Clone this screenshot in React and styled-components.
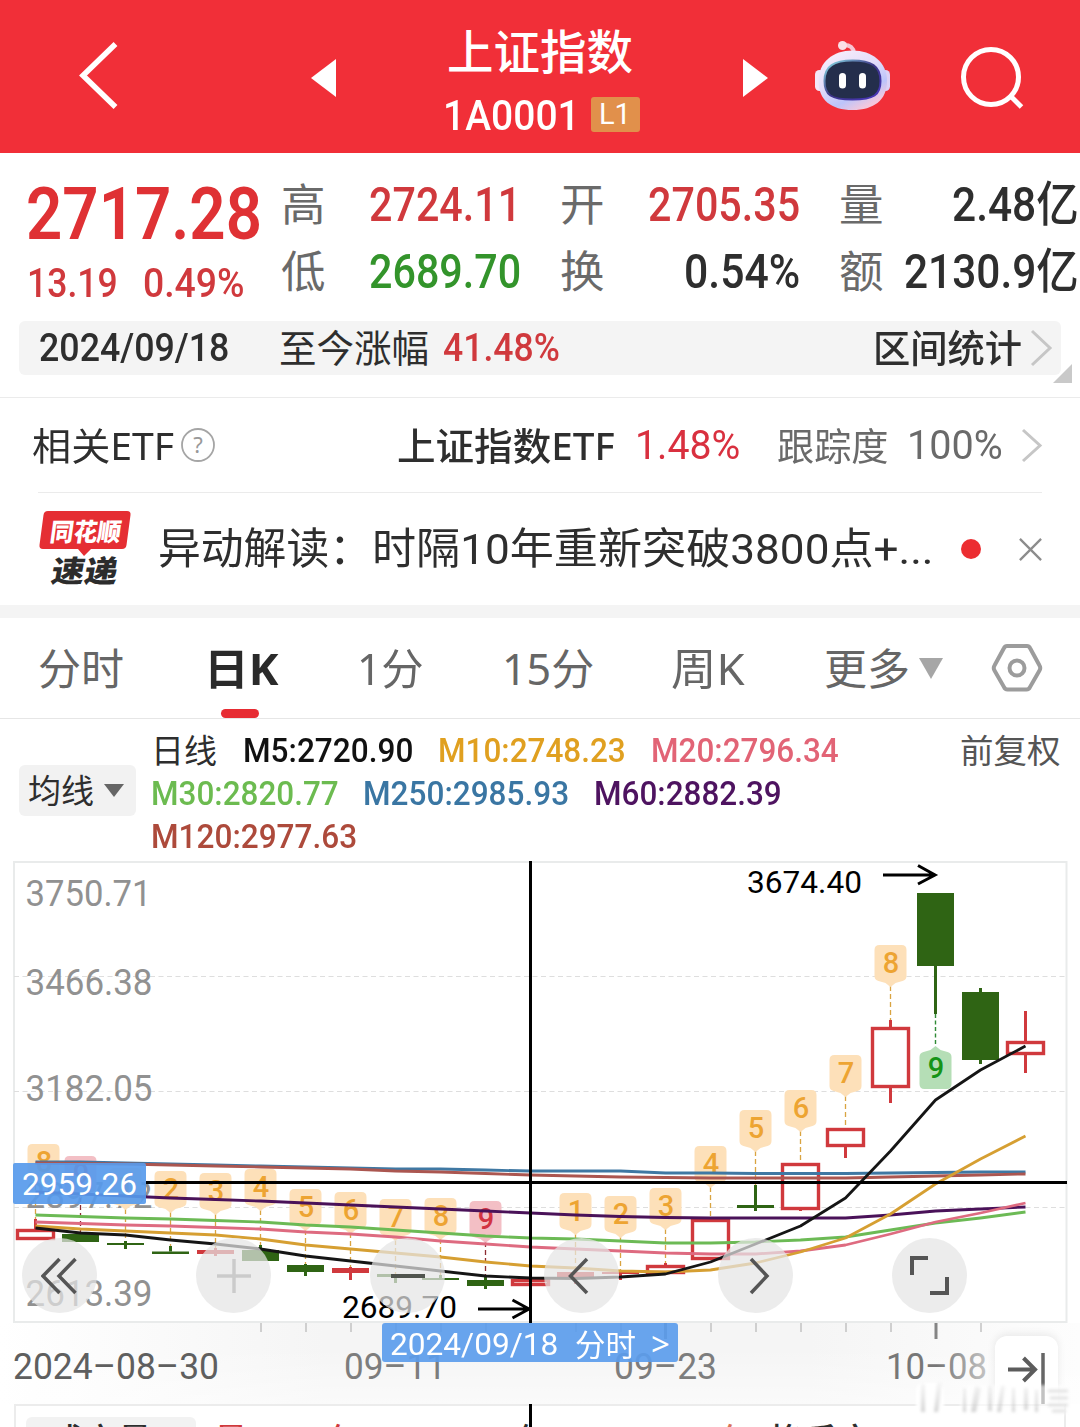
import React, { useLayoutEffect, useRef, useState } from 'react';
import styled, { createGlobalStyle } from 'styled-components';

const numFont = 'Roboto, "Noto Sans CJK SC", sans-serif';
const textFont = '"Noto Sans", "Noto Sans CJK SC", sans-serif';

const RED = '#d0393d';
const GREEN = '#2f6414';

const GlobalStyle = createGlobalStyle`
  body {
    margin: 0;
    background: #fff;
    overflow: hidden;
  }

  * {
    box-sizing: border-box;
  }
`;

const Page = styled.div`
  width: 1080px;
  height: 1427px;
  overflow: hidden;
  background: #fff;
  color: #2e2e2e;
  font-family: ${textFont};
`;

/* ---------- text squeezed to a given width ---------- */

const FitBox = styled.span`
  display: inline-block;
  flex: none;
  width: ${(p) => p.$w}px;
  margin-left: ${(p) => p.$ml || 0}px;
  margin-right: ${(p) => p.$mr || 0}px;
  font-family: ${(p) => (p.$num ? numFont : textFont)};
  font-size: ${(p) => p.$size}px;
  font-weight: ${(p) => p.$weight || 400};
  color: ${(p) => p.$color || 'inherit'};
  white-space: nowrap;
`;

const FitInner = styled.span`
  display: inline-block;
  transform-origin: 0 50%;
`;

function Fit({ w, size, weight, color, num, ml, mr, children }) {
  const ref = useRef(null);
  const [scale, setScale] = useState(1);

  useLayoutEffect(() => {
    setScale(w / ref.current.offsetWidth);
  }, [w, children]);

  return (
    <FitBox $w={w} $size={size} $weight={weight} $color={color} $num={num} $ml={ml} $mr={mr}>
      <FitInner ref={ref} style={{ transform: `scaleX(${scale})` }}>
        {children}
      </FitInner>
    </FitBox>
  );
}

/* ---------- header ---------- */

const Header = styled.header`
  display: flex;
  align-items: center;
  height: 153px;
  padding-left: 78px;
  background: #f12f38;
  color: #fff;

  svg {
    flex: none;
    display: block;
  }
`;

const TitleBlock = styled.div`
  width: 200px;
  margin: 0 102px 0 105px;
  padding-top: 12px;
`;

const Title = styled.div`
  height: 64px;
  padding-left: 6px;
  line-height: 64px;
`;

const CodeLine = styled.div`
  display: flex;
  align-items: center;
  height: 64px;
  padding-left: 2px;
  line-height: 64px;
`;

const LevelTag = styled.span`
  width: 49px;
  height: 35px;
  margin-left: 11px;
  padding-left: 8px;
  border-radius: 3px;
  background: #e1904b;
  line-height: 35px;
`;

const Robot = styled.svg`
  margin-left: 46px;
`;

const Search = styled.svg`
  margin-left: 68px;
`;

const Prev = styled.svg`
  margin-left: 191px;
`;

/* ---------- quote ---------- */

const Quote = styled.section`
  display: flex;
  height: 168px;
  padding-top: 18px;
`;

const Main = styled.div`
  flex: none;
  width: 281px;
  padding-left: 26px;
`;

const Price = styled.div`
  height: 84px;
  line-height: 86px;
`;

const Change = styled.div`
  display: flex;
  height: 54px;
  line-height: 56px;
`;

const Stats = styled.div`
  display: grid;
  flex: none;
  grid-template-columns: repeat(3, 279px);
  grid-auto-rows: 67px;
`;

const Stat = styled.div`
  display: flex;
  justify-content: space-between;
  width: 240px;
  height: 67px;
  line-height: 69px;
`;

const StatLabel = styled.span`
  color: #6a6a6a;
  font-size: 44.5px;
  line-height: 65px;
`;

const RangeBar = styled.div`
  position: relative;
  display: flex;
  align-items: center;
  height: 54px;
  margin: 0 19px;
  padding: 0 8px 0 20px;
  border-radius: 6px;
  background: #f4f4f4;
  line-height: 54px;
`;

const Spacer = styled.div`
  flex: 1;
`;

const Corner = styled.i`
  position: absolute;
  right: -11px;
  bottom: -8px;
  border-left: 19px solid transparent;
  border-bottom: 19px solid #c9c9c9;
`;

/* ---------- ETF and news rows ---------- */

const EtfRow = styled.div`
  display: flex;
  align-items: center;
  height: 95px;
  margin-top: 22px;
  padding: 0 37px 0 32px;
  border-top: 1px solid #ebebeb;
  line-height: 95px;
`;

const NewsRow = styled.div`
  display: flex;
  align-items: center;
  height: 113px;
  margin: 0 38px;
  border-top: 1px solid #ebebeb;
  line-height: 114px;
`;

const RedDot = styled.span`
  flex: none;
  width: 20px;
  height: 20px;
  margin: 0 38px 0 28px;
  border-radius: 50%;
  background: #ec2d31;
`;

const Logo = styled.svg`
  flex: none;
  overflow: visible;
`;

/* ---------- tabs ---------- */

const Tabs = styled.nav`
  display: flex;
  align-items: center;
  height: 114px;
  padding-left: 38px;
  border-top: 13px solid #f4f4f4;
  border-bottom: 1px solid #e6e6e6;
  line-height: 101px;
`;

const Tab = styled.div`
  position: relative;
  height: 100px;
  margin-right: ${(p) => p.$gap}px;
  color: ${(p) => (p.$active ? '#2a2a2a' : '#666')};

  &::after {
    content: '';
    display: ${(p) => (p.$active ? 'block' : 'none')};
    position: absolute;
    left: 17px;
    bottom: 0;
    width: 38px;
    height: 9px;
    border-radius: 5px;
    background: #e72c33;
  }
`;

/* ---------- MA legend ---------- */

const Legend = styled.div`
  display: flex;
  height: 142px;
  padding: 10px 19px 0;
`;

const MaButton = styled.div`
  display: flex;
  align-items: center;
  width: 117px;
  height: 51px;
  margin: 36px 15px 0 0;
  padding-left: 9px;
  border-radius: 6px;
  background: #f2f2f2;
  line-height: 51px;
`;

const MaList = styled.div`
  flex: 1;
`;

const MaLine = styled.div`
  display: flex;
  height: 43px;
  line-height: 43px;
`;

/* ---------- chart ---------- */

const ChartArea = styled.div`
  position: relative;
  height: 543px;
`;

const Canvas = styled.svg`
  display: block;
`;

const Tools = styled.div`
  position: absolute;
  left: 22px;
  top: 377px;
  display: flex;
  gap: 98.6px;
`;

const Tool = styled.div`
  display: flex;
  align-items: center;
  justify-content: center;
  width: 75.4px;
  height: 75.4px;
  border-radius: 50%;
  background: rgba(229, 229, 229, 0.72);
`;

const DateFlag = styled.div`
  position: absolute;
  left: 382px;
  top: 462px;
  display: flex;
  width: 296px;
  height: 39px;
  padding-left: 8px;
  border-radius: 3px;
  background: rgba(91, 156, 236, 0.92);
  color: #fff;
  line-height: 42px;
`;

const ToLatest = styled.div`
  position: absolute;
  left: 995px;
  top: 475px;
  width: 63px;
  height: 68px;
  border-radius: 12px 12px 0 0;
  background: #fff;
  box-shadow: 0 -2px 8px rgba(0, 0, 0, 0.08);
`;

const Streaks = styled.svg`
  position: absolute;
  left: 910px;
  top: 517px;
  filter: blur(1.8px);
`;

const Volume = styled.div`
  display: flex;
  height: 60px;
  margin: 0 14px;
  padding: 11px 0 0 10px;
  border: 2px solid #ececec;
  border-bottom: 0;
  line-height: 46px;
`;

const VolumeButton = styled.div`
  flex: none;
  width: 170px;
  height: 46px;
  margin-right: 18px;
  padding-left: 24px;
  border-radius: 6px;
  background: #f2f2f2;
`;

const VolumeText = styled.span`
  flex: none;
  width: ${(p) => p.$w}px;
  margin-left: ${(p) => p.$ml || 0}px;
  font-size: 34px;
  font-weight: 500;
  color: ${(p) => p.$color};
  white-space: nowrap;
`;

const Cross = styled.i`
  flex: none;
  width: 3px;
  height: 60px;
  margin: -13px -3px 0 0;
  background: #000;
`;

const xAt = (i) => 35.5 + i * 45;

// kind, body top, body bottom, wick top, wick bottom
const candles = [
  ['hollow', 1229, 1240, 1219, 1229],
  ['down', 1234, 1242, 1234, 1242],
  ['down', 1243, 1245, 1241, 1249],
  ['down', 1251.5, 1254, 1246, 1254],
  ['up', 1250, 1254, 1248, 1256],
  ['down', 1250, 1261, 1245, 1261],
  ['down', 1265, 1272, 1264, 1276],
  ['up', 1268, 1273, 1267, 1280],
  ['down', 1274, 1277, 1274, 1283],
  ['down', 1278, 1280, 1275, 1280],
  ['down', 1280, 1286, 1276, 1289],
  ['hollow', 1279, 1286, 1279, 1279],
  ['up', 1272, 1278, 1272, 1284],
  ['up', 1272, 1274, 1271, 1280],
  ['hollow', 1265, 1274, 1263, 1265],
  ['hollow', 1219, 1260, 1219, 1219],
  ['down', 1205, 1208, 1185, 1211],
  ['hollow', 1163, 1210, 1210, 1211],
  ['hollow', 1128, 1147, 1147, 1158],
  ['hollow', 1027, 1088, 1020, 1103],
  ['down', 893, 966, 966, 1014],
  ['down', 992, 1060, 988, 1064],
  ['hollow', 1041, 1055, 1011, 1073],
];

const lines = [
  ['#3f78a3', [1162, 1162, 1163, 1164, 1165, 1166, 1167, 1168, 1169, 1169, 1170, 1171, 1171, 1171, 1173, 1173, 1173.5, 1173.5, 1173.5, 1173, 1172.5, 1172, 1172]],
  ['#ab5650', [1163, 1163.5, 1164, 1165, 1166, 1167, 1168, 1169, 1171, 1172, 1173.5, 1175, 1176, 1177, 1177.5, 1178, 1178, 1178, 1178, 1177, 1176, 1175, 1174]],
  ['#4a1259', [1192, 1194, 1196, 1198, 1199.5, 1201, 1203, 1205, 1207, 1209, 1211, 1213, 1215, 1216.5, 1217.5, 1218, 1218, 1218, 1218, 1215, 1211, 1209, 1207]],
  ['#6cba55', [1215, 1216.5, 1218, 1219, 1220.5, 1222, 1225, 1227, 1230, 1233, 1236, 1238, 1239, 1241, 1243, 1243, 1242, 1240, 1237, 1230, 1223, 1218, 1212]],
  ['#de6b80', [1222, 1223.5, 1225, 1226, 1227.5, 1229, 1232, 1234, 1237, 1241, 1244, 1247, 1249, 1251, 1253, 1254, 1254, 1251, 1245, 1234, 1222, 1213, 1203]],
  ['#d69f32', [1226, 1229, 1231, 1233, 1235, 1239, 1245, 1249, 1253, 1257, 1262, 1266, 1268, 1271, 1272, 1270, 1263, 1252, 1238, 1214, 1184, 1159, 1136]],
  ['#151515', [1228, 1233, 1235, 1240, 1244, 1249, 1256, 1261, 1266, 1271, 1276, 1278, 1278.5, 1277, 1274, 1262, 1244, 1226, 1198, 1151, 1100, 1070, 1046]],
];

// candle index, digit, tag top, end of the dashed stem
const signals = [
  [0, '8', 1144, 1219],
  [1, '9', 1156, 1234],
  [2, '1', 1168, 1241],
  [3, '2', 1171, 1246],
  [4, '3', 1173, 1248],
  [5, '4', 1169, 1245],
  [6, '5', 1189, 1264],
  [7, '6', 1192, 1267],
  [8, '7', 1199, 1274],
  [9, '8', 1198, 1275],
  [10, '9', 1201, 1276],
  [12, '1', 1193, 1272],
  [13, '2', 1196, 1271],
  [14, '3', 1188, 1263],
  [15, '4', 1146, 1219],
  [16, '5', 1110, 1185],
  [17, '6', 1090, 1163],
  [18, '7', 1055, 1128],
  [19, '8', 945, 1020],
];

const priceLabels = [
  ['3750.71', 906, 126],
  ['3466.38', 995, 127],
  ['3182.05', 1101, 127],
  ['2897.72', 1208, 127],
  ['2613.39', 1306, 127],
];

const dateLabels = [
  ['2024-08-30', 13, 206, '#5f5f5f'],
  ['09-11', 344, 102, '#7d7d7d'],
  ['09-23', 614, 103, '#7d7d7d'],
  ['10-08', 886, 101, 'url(#fade)'],
];

function Label({ x, y, w, size, fill, weight, children }) {
  return (
    <text
      x={x}
      y={y}
      textLength={w}
      lengthAdjust="spacingAndGlyphs"
      fontFamily={numFont}
      fontSize={size}
      fontWeight={weight}
      fill={fill}
    >
      {children}
    </text>
  );
}

function Candle({ i, data }) {
  const [kind, top, bottom, high, low] = data;
  const x = xAt(i);
  const color = kind === 'down' ? GREEN : RED;

  return (
    <g>
      {high < top && <rect x={x - 1.5} y={high} width="3" height={top - high} fill={color} />}
      {low > bottom && <rect x={x - 1.5} y={bottom} width="3" height={low - bottom} fill={color} />}
      {kind === 'hollow' ? (
        <rect x={x - 18} y={top + 1.5} width="36" height={bottom - top - 3} stroke={color} strokeWidth="3.4" />
      ) : (
        <rect x={x - 18.5} y={top} width="37" height={bottom - top} fill={color} />
      )}
    </g>
  );
}

function Signal({ i, digit, top, end }) {
  const x = xAt(i);
  const cx = i === 0 ? 43.5 : x;
  const nine = digit === '9';

  return (
    <g>
      <path d={`M${x} ${top + 41}V${end}`} stroke={nine ? '#8d2c31' : '#d9a441'} strokeWidth="1.3" strokeDasharray="5 3" />
      <path
        d={`M${cx - 11} ${top}h22q5 0 5 5v26q0 4-4 5l-7 2-5 4-5-4-7-2q-4-1-4-5v-26q0-5 5-5z`}
        fill={nine ? '#f3bfc5' : '#fde0b9'}
      />
      <text
        x={cx + 0.5}
        y={top + 27.5}
        textAnchor="middle"
        fontFamily={numFont}
        fontSize="29"
        fontWeight="500"
        fill={nine ? '#d23341' : '#eda432'}
      >
        {digit}
      </text>
    </g>
  );
}

function KLineChart() {
  return (
    <Canvas width="1080" height="543" viewBox="0 861 1080 543" fill="none">
      <defs>
        <linearGradient id="axisBg" x1="0" x2="1" y1="0" y2="0">
          <stop offset="0" stopColor="#fff" />
          <stop offset="0.3" stopColor="#f5f5f5" />
          <stop offset="0.75" stopColor="#f5f5f5" />
          <stop offset="1" stopColor="#fdfdfd" />
        </linearGradient>
        <linearGradient id="axisFade" x1="0" x2="0" y1="0" y2="1">
          <stop offset="0.3" stopColor="#fff" stopOpacity="0" />
          <stop offset="1" stopColor="#fff" stopOpacity="0.5" />
        </linearGradient>
        <linearGradient id="fade" x1="0" x2="1" y1="0" y2="0">
          <stop offset="0.5" stopColor="#777" />
          <stop offset="1" stopColor="#c4c4c4" />
        </linearGradient>
      </defs>

      <rect x="0" y="1323" width="1080" height="81" fill="url(#axisBg)" />
      <rect x="0" y="1323" width="1080" height="81" fill="url(#axisFade)" />
      <rect x="14" y="862" width="1052.5" height="460" stroke="#e9ebeb" strokeWidth="2" />
      {[976.5, 1091.5, 1207.5].map((y) => (
        <path key={y} d={`M14 ${y}H1066`} stroke="#dedede" strokeWidth="1.2" strokeDasharray="5 3.5" />
      ))}

      {priceLabels.map(([label, y, w]) => (
        <Label key={label} x={25.5} y={y} w={w} size={37.5} fill="#919191">
          {label}
        </Label>
      ))}

      {signals.map(([i, digit, top, end]) => (
        <Signal key={i} i={i} digit={digit} top={top} end={end} />
      ))}
      <path d="M935.5 1014V1046" stroke="#2f8a35" strokeWidth="1.4" strokeDasharray="4 2.5" />
      <path d="M924.5 1089h22q5 0 5-5v-27q0-4-4-5l-7-2-5-4-5 4-7 2q-4 1-4 5v27q0 5 5 5z" fill="#b5deb6" />
      <text x="936" y="1078" textAnchor="middle" fontFamily={numFont} fontSize="29" fontWeight="500" fill="#159417">
        9
      </text>

      {candles.map((c, i) => (
        <Candle key={i} i={i} data={c} />
      ))}
      {lines.map(([color, ys]) => (
        <polyline
          key={color}
          points={ys.map((y, i) => `${xAt(i)},${y}`).join(' ')}
          stroke={color}
          strokeWidth="2.8"
          strokeLinejoin="round"
        />
      ))}

      <Label x={747} y={893} w={115} size={32} fill="#000">3674.40</Label>
      <path d="M883 875H935M918 865.5L935 875L918 884" stroke="#000" strokeWidth="3" />
      <Label x={342} y={1318} w={115} size={32} fill="#000">2689.70</Label>
      <path d="M478 1309H529M512.5 1300L529 1309L512.5 1318" stroke="#000" strokeWidth="3" />

      <path d="M530.5 861V1323M146 1182.5H1067" stroke="#000" strokeWidth="3" />
      <rect x="13" y="1163" width="133" height="41" rx="2" fill="#579aec" fillOpacity="0.92" />
      <Label x={22} y={1195} w={115} size={32} fill="#fff">2959.26</Label>

      {[5, 6, 7, 8, 9, 10, 12, 13, 15, 16, 17, 18, 19, 21].map((i) => (
        <path key={i} d={`M${xAt(i) + 0.5} 1323V1332`} stroke="#c2c2c2" strokeWidth="1.5" />
      ))}
      <path d="M936 1323V1339M665.5 1323V1339" stroke="#858585" strokeWidth="3" />
      {dateLabels.map(([label, x, w, fill]) => (
        <Label key={label} x={x} y={1379} w={w} size={37} fill={fill}>
          {label.replaceAll('-', '–')}
        </Label>
      ))}
    </Canvas>
  );
}

const Chevron = ({ w, h, color, ml }) => (
  <svg width={w + 4} height={h + 4} viewBox={`-2 -2 ${w + 4} ${h + 4}`} fill="none" style={{ marginLeft: ml }}>
    <path d={`M1 1L${w - 1} ${h / 2}L1 ${h - 1}`} stroke={color} strokeWidth="3" />
  </svg>
);

const Caret = styled.i`
  margin-left: ${(p) => p.$ml}px;
  border: ${(p) => p.$half}px solid transparent;
  border-top: ${(p) => p.$h}px solid ${(p) => p.$color};
  border-bottom: 0;
`;

function RobotIcon() {
  return (
    <Robot width="76" height="72" viewBox="814 41 76 72" fill="none">
      <defs>
        <linearGradient id="head" x1="0" x2="0.6" y1="0" y2="1">
          <stop offset="0" stopColor="#fdf2fb" />
          <stop offset="0.5" stopColor="#e3dcfa" />
          <stop offset="0.8" stopColor="#bcc4fa" />
          <stop offset="1" stopColor="#f3c7dc" />
        </linearGradient>
        <linearGradient id="visorEdge" x1="0" x2="1" y1="0" y2="1">
          <stop offset="0" stopColor="#8ee6ea" />
          <stop offset="0.5" stopColor="#3d3487" />
          <stop offset="1" stopColor="#4a36c0" />
        </linearGradient>
      </defs>
      <path d="M842 45q11-1 12 8" stroke="#f7c6d3" strokeWidth="4" />
      <circle cx="842.5" cy="45.5" r="4.5" fill="#fbdfe7" />
      <rect x="815" y="70" width="9" height="21" rx="4.5" fill="#f4e6f8" />
      <rect x="881" y="70" width="9" height="21" rx="4.5" fill="#dcd2f6" />
      <path d="M852.5 50.5C872 50.5 887 62 887 81C887 100 874 110 852.5 110C831 110 818.5 100 818.5 81C818.5 62 833 50.5 852.5 50.5z" fill="url(#head)" />
      <path d="M852.5 60.5C871 60.5 880.5 66 880.5 81C880.5 95 874 99.5 852.5 99.5C831 99.5 824.5 95 824.5 81C824.5 66 834 60.5 852.5 60.5z" fill="#242e4c" stroke="url(#visorEdge)" strokeWidth="2" />
      <rect x="839" y="73" width="7" height="15.5" rx="3.5" fill="#fff" />
      <rect x="859" y="73" width="7" height="15.5" rx="3.5" fill="#fff" />
    </Robot>
  );
}

function BrandLogo() {
  return (
    <Logo width="94" height="78" viewBox="38 510 94 78">
      <path d="M48 511H127q4 0 3.5 4l-4 30q-.5 4-4.5 4H91l-7 7-6-7H43q-4 0-3.5-4l4-30q.5-4 4.5-4z" fill="#e52e33" />
      <g fontFamily={textFont} fontWeight="900">
        <text transform="translate(49 540.5) skewX(-8)" fontSize="25" textLength="71" lengthAdjust="spacingAndGlyphs" fill="#fff">
          同花顺
        </text>
        <text transform="translate(50 582) skewX(-10)" fontSize="30" textLength="66" lengthAdjust="spacingAndGlyphs" fill="#2c2c2c">
          速递
        </text>
      </g>
    </Logo>
  );
}

export default function App() {
  return (
    <>
      <GlobalStyle />
      <Page>
        <Header>
          <svg width="42" height="72" viewBox="78 41 42 72" fill="none">
            <path d="M115.5 44L83 75.5L115.5 107" stroke="#fff" strokeWidth="5.5" />
          </svg>
          <Prev width="25" height="42" viewBox="0 0 25 42">
            <path d="M25 3V41L0 22z" fill="#fff" />
          </Prev>
          <TitleBlock>
            <Title>
              <Fit w={186} size={46.5} weight={500}>上证指数</Fit>
            </Title>
            <CodeLine>
              <Fit w={137} size={43} weight={500} num>1A0001</Fit>
              <LevelTag>
                <Fit w={32} size={29} num>L1</Fit>
              </LevelTag>
            </CodeLine>
          </TitleBlock>
          <svg width="25" height="42" viewBox="0 0 25 42">
            <path d="M0 3V41L25 22z" fill="#fff" />
          </svg>
          <RobotIcon />
          <Search width="68" height="68" viewBox="958 43 68 68" fill="none">
            <circle cx="991" cy="77" r="27.5" stroke="#fff" strokeWidth="5" />
            <path d="M1010.5 96L1021.5 107" stroke="#fff" strokeWidth="5" />
          </Search>
        </Header>

        <Quote>
          <Main>
            <Price>
              <Fit w={236} size={73} weight={600} color="#df3134" num>2717.28</Fit>
            </Price>
            <Change>
              <Fit w={91} size={41} weight={500} color={RED} num ml={1}>13.19</Fit>
              <Fit w={102} size={41} weight={500} color={RED} num ml={25}>0.49%</Fit>
            </Change>
          </Main>
          <Stats>
            <Stat>
              <StatLabel>高</StatLabel>
              <Fit w={152} size={47.5} weight={500} color={RED} num>2724.11</Fit>
            </Stat>
            <Stat>
              <StatLabel>开</StatLabel>
              <Fit w={152} size={47.5} weight={500} color={RED} num>2705.35</Fit>
            </Stat>
            <Stat>
              <StatLabel>量</StatLabel>
              <Fit w={127} size={47.5} weight={500} num>2.48亿</Fit>
            </Stat>
            <Stat>
              <StatLabel>低</StatLabel>
              <Fit w={152} size={47.5} weight={500} color="#33942b" num>2689.70</Fit>
            </Stat>
            <Stat>
              <StatLabel>换</StatLabel>
              <Fit w={116} size={47.5} weight={500} num>0.54%</Fit>
            </Stat>
            <Stat>
              <StatLabel>额</StatLabel>
              <Fit w={175} size={47.5} weight={500} num>2130.9亿</Fit>
            </Stat>
          </Stats>
        </Quote>

        <RangeBar>
          <Fit w={190} size={38} weight={500} num mr={50}>2024/09/18</Fit>
          <Fit w={150} size={37.5}>至今涨幅</Fit>
          <Fit w={117} size={38} weight={500} color={RED} num ml={14}>41.48%</Fit>
          <Spacer />
          <Fit w={149} size={37.5} weight={500} mr={7}>区间统计</Fit>
          <Chevron w={20} h={36} color="#c6c6c6" />
          <Corner />
        </RangeBar>

        <EtfRow>
          <Fit w={142} size={37.5}>相关ETF</Fit>
          <svg width="36" height="36" viewBox="0 0 36 36" fill="none" style={{ marginLeft: 6 }}>
            <circle cx="18" cy="18" r="16" stroke="#a5a5a5" strokeWidth="1.8" />
            <text x="18" y="26" textAnchor="middle" fontFamily={textFont} fontSize="22" fill="#999">?</text>
          </svg>
          <Spacer />
          <Fit w={218} size={37.5} weight={500}>上证指数ETF</Fit>
          <Fit w={105} size={40} color="#d9303f" num ml={20}>1.48%</Fit>
          <Fit w={112} size={37.5} color="#6a6a6a" ml={37}>跟踪度</Fit>
          <Fit w={96} size={40} color="#6a6a6a" num ml={18}>100%</Fit>
          <Chevron w={19} h={33} color="#c6c6c6" ml={17} />
        </EtfRow>

        <NewsRow>
          <BrandLogo />
          <Fit w={214} size={43} num ml={26}>异动解读：</Fit>
          <Fit w={561} size={43} num>时隔10年重新突破3800点+...</Fit>
          <RedDot />
          <svg width="25" height="25" viewBox="0 0 25 25" fill="none">
            <path d="M1 1L24 24M24 1L1 24" stroke="#8c8c8c" strokeWidth="2.5" />
          </svg>
        </NewsRow>

        <Tabs>
          <Tab $gap={80}><Fit w={86} size={43}>分时</Fit></Tab>
          <Tab $active $gap={78}><Fit w={75} size={43} weight={700}>日K</Fit></Tab>
          <Tab $gap={78}><Fit w={67} size={43}>1分</Fit></Tab>
          <Tab $gap={77}><Fit w={92} size={43}>15分</Fit></Tab>
          <Tab $gap={79}><Fit w={74} size={43}>周K</Fit></Tab>
          <Tab $gap={0}><Fit w={86} size={43}>更多</Fit></Tab>
          <Caret $half={12} $h={21} $color="#a6a6a6" $ml={9} />
          <svg width="52" height="50" viewBox="991 643 52 50" fill="none" style={{ marginLeft: 48 }}>
            <path d="M1007 646H1027q2 0 3 2L1039.5 665.5q1.5 2.5 0 5L1030 687q-1 2.5-3.5 2.5H1007.5q-2.5 0-3.5-2.5L994.5 670.5q-1.5-2.5 0-5L1004 648q1-2 3-2z" stroke="#9c9c9c" strokeWidth="4" />
            <circle cx="1017" cy="668" r="7.5" stroke="#9c9c9c" strokeWidth="4" />
          </svg>
        </Tabs>

        <Legend>
          <MaButton>
            <Fit w={66} size={33}>均线</Fit>
            <Caret $half={10} $h={13} $color="#666" $ml={10} />
          </MaButton>
          <MaList>
            <MaLine>
              <Fit w={66} size={33}>日线</Fit>
              <Fit w={170} size={34} weight={500} color="#111" num ml={26}>M5:2720.90</Fit>
              <Fit w={188} size={34} weight={500} color="#e0a020" num ml={25}>M10:2748.23</Fit>
              <Fit w={188} size={34} weight={500} color="#e26476" num ml={25}>M20:2796.34</Fit>
            </MaLine>
            <MaLine>
              <Fit w={188} size={34} weight={500} color="#6cbb50" num>M30:2820.77</Fit>
              <Fit w={206} size={34} weight={500} color="#3a76a3" num ml={24}>M250:2985.93</Fit>
              <Fit w={188} size={34} weight={500} color="#4e1360" num ml={25}>M60:2882.39</Fit>
            </MaLine>
            <MaLine>
              <Fit w={206} size={34} weight={500} color="#ad4a3b" num>M120:2977.63</Fit>
            </MaLine>
          </MaList>
          <MaLine>
            <Fit w={101} size={33.5} color="#555">前复权</Fit>
          </MaLine>
        </Legend>

        <ChartArea>
          <KLineChart />
          <Tools>
            <Tool>
              <svg width="38" height="38" viewBox="0 0 38 38" fill="none">
                <path d="M18.5 2L2 19L18.5 36M34.5 2L18 19L34.5 36" stroke="#555" strokeWidth="3.5" />
              </svg>
            </Tool>
            <Tool>
              <svg width="36" height="36" viewBox="0 0 36 36" fill="none">
                <path d="M18 1V35M1 18H35" stroke="#cbcbcb" strokeWidth="3.5" />
              </svg>
            </Tool>
            <Tool>
              <svg width="36" height="36" viewBox="0 0 36 36" fill="none">
                <path d="M1 18H35" stroke="#50544e" strokeWidth="4" />
              </svg>
            </Tool>
            <Tool>
              <svg width="30" height="38" viewBox="0 0 30 38" fill="none">
                <path d="M20 2L3.5 19L20 36" stroke="#555" strokeWidth="3.5" />
              </svg>
            </Tool>
            <Tool>
              <svg width="30" height="38" viewBox="0 0 30 38" fill="none">
                <path d="M10 2L26 19L10 36" stroke="#555" strokeWidth="3.5" />
              </svg>
            </Tool>
            <Tool>
              <svg width="39" height="39" viewBox="0 0 39 39" fill="none">
                <path d="M2 19V2H18M37 21V37H20" stroke="#555" strokeWidth="4" />
              </svg>
            </Tool>
          </Tools>
          <DateFlag>
            <Fit w={168} size={32} num>2024/09/18</Fit>
            <Fit w={61} size={31} ml={17}>分时</Fit>
            <Fit w={19} size={33} ml={15}>&gt;</Fit>
          </DateFlag>
          <ToLatest>
            <svg width="64" height="68" viewBox="995 1336 64 68" fill="none">
              <path d="M1008 1369.5H1034M1023.5 1358L1035 1369.5L1023.5 1381" stroke="#5c5c5c" strokeWidth="4" />
              <path d="M1043 1353V1404" stroke="#666" strokeWidth="3.5" />
            </svg>
          </ToLatest>
          <Streaks width="170" height="46" viewBox="910 1378 170 46" fill="none">
            <defs>
              <linearGradient id="streak" x1="0" x2="0" y1="0" y2="1">
                <stop offset="0" stopColor="#ddd" stopOpacity="0.3" />
                <stop offset="1" stopColor="#a8a8a8" stopOpacity="0.5" />
              </linearGradient>
            </defs>
            <rect x="916" y="1383" width="28" height="32" rx="7" fill="#fff" />
            <rect x="960" y="1385" width="110" height="30" rx="7" fill="#fff" fillOpacity="0.6" />
            <path
              d="M921 1384h4v28h-4zM937 1383h5l-4 29h-4zM963 1388h3v24h-3zM975 1386l6 2-5 24h-5zM988 1386h4v25h-4zM1001 1386h4l-4 26h-4zM1012 1388h3v24h-3zM1024 1388h4v22h-4zM1035 1390h3v22h-3z"
              fill="url(#streak)"
            />
            <path d="M1048 1391h20M1050 1398h18M1048 1405h20M1052 1411h14" stroke="#e2e2e2" strokeWidth="3" />
          </Streaks>
        </ChartArea>

        <Volume>
          <VolumeButton>
            <Fit w={102} size={34} weight={500}>成交量</Fit>
          </VolumeButton>
          <VolumeText $w={114} $color={RED}>量</VolumeText>
          <VolumeText $w={201} $color={RED}>亿</VolumeText>
          <Cross />
          <VolumeText $w={204} $ml={-13} $color="#2e2e2e">亿</VolumeText>
          <VolumeText $w={50} $color="#d9745a">亿</VolumeText>
          <VolumeText $w={130} $color="#2e2e2e">换手率</VolumeText>
        </Volume>
      </Page>
    </>
  );
}
